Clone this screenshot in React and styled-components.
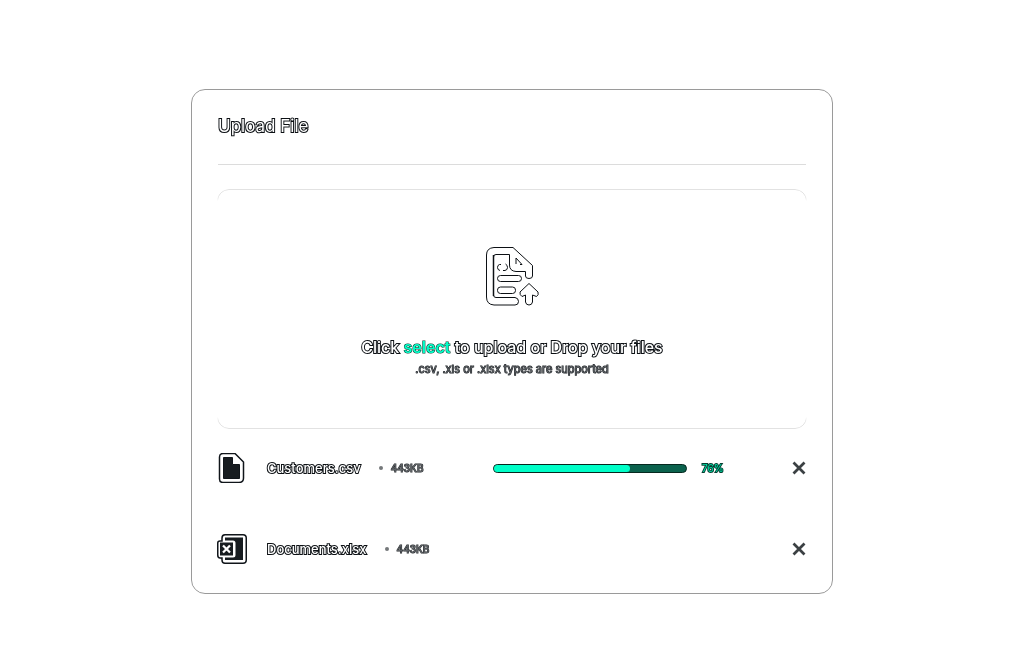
import React from "react";
import styled, { createGlobalStyle } from "styled-components";

const GlobalStyle = createGlobalStyle`
  * { box-sizing: border-box; }
  body {
    margin: 0;
    background: #fff;
    color: #10151a;
    font-family: Inter, "Liberation Sans", sans-serif;
  }
`;

const Page = styled.main`
  display: flex;
  justify-content: center;
  padding: 89px 24px 70px;
  will-change: transform;
`;

const Card = styled.section`
  width: 100%;
  max-width: 642px;
  padding: 24px 25px;
  border: 1px solid #9a9a9a;
  border-radius: 14px;
`;

const Header = styled.header`
  margin: 0 1px 24px;
  padding-bottom: 26px;
  border-bottom: 1px solid #dcdcdc;
`;

const Outlined = styled.span`
  color: #fff;
  -webkit-text-stroke: 2px #0c1014;
  paint-order: stroke fill;
`;

const Title = styled(Outlined).attrs({ as: "h1" })`
  margin: 0;
  font-size: 17px;
  line-height: 24px;
  font-weight: 400;
`;

const DropZone = styled.div`
  position: relative;
  display: flex;
  flex-direction: column;
  align-items: center;
  height: 240px;
  padding-top: 56px;

  &::before {
    content: "";
    position: absolute;
    inset: 0;
    border: 1px solid #e2e2e2;
    border-radius: 12px;
    mask-image: linear-gradient(#000 8px, transparent 12px calc(100% - 12px), #000 calc(100% - 8px));
    pointer-events: none;
  }
`;

const Prompt = styled(Outlined).attrs({ as: "p" })`
  margin: 28px 0 0;
  font-size: 16px;
  line-height: 24px;
  font-weight: 500;
`;

const SelectButton = styled.button`
  padding: 0;
  border: 0;
  background: none;
  font: inherit;
  font-weight: 600;
  color: #00ffc8;
  -webkit-text-stroke: 1px #08362b;
  paint-order: stroke fill;
  cursor: pointer;
`;

const Hint = styled.p`
  margin: 0;
  font-size: 11px;
  line-height: 20px;
  color: #606468;
  -webkit-text-stroke: 1px #15191d;
  paint-order: stroke fill;
`;

const FileList = styled.ul`
  display: flex;
  flex-direction: column;
  gap: 41px;
  margin: 19px 0 0;
  padding: 0;
  list-style: none;
`;

const FileRow = styled.li`
  display: flex;
  align-items: center;
  height: 40px;
`;

const FileInfo = styled.div`
  display: flex;
  align-items: center;
  flex: 0 0 276px;
`;

const IconCell = styled.span`
  display: flex;
  width: 50px;
`;

const FileName = styled(Outlined)`
  font-size: 13px;
  line-height: 20px;
  font-weight: 500;
`;

const Dot = styled.span`
  width: 4px;
  height: 4px;
  margin: 0 8px 0 18px;
  border-radius: 50%;
  background: #74787a;
`;

const FileSize = styled.span`
  font-size: 10px;
  line-height: 20px;
  font-weight: 500;
  color: #606468;
  -webkit-text-stroke: 1px #1d2124;
  paint-order: stroke fill;
`;

const Track = styled.div`
  flex: 0 1 194px;
  height: 9px;
  border: 1px solid #06281f;
  border-radius: 5px;
  background: #0b624d;
  overflow: hidden;
`;

const Bar = styled.div`
  height: 100%;
  border-radius: 0 4px 4px 0;
  background: #00ffc8;
`;

const Percent = styled.span`
  margin-left: 15px;
  font-size: 10px;
  line-height: 20px;
  color: #00e0a8;
  -webkit-text-stroke: 2px #063d30;
  paint-order: stroke fill;
`;

const CloseButton = styled.button`
  display: flex;
  margin: 0 1px 0 auto;
  padding: 0;
  border: 0;
  background: none;
  cursor: pointer;
`;

function UploadIcon() {
  return (
    <svg width="56" height="62" viewBox="0 0 56 62" fill="none" stroke="#0c1014" aria-hidden="true">
      <path d="M10 2.5H29L48.5 20.5V31Q48.5 33.5 45 33.5Q41.5 33.5 41.5 31V26.5H32Q25.5 26 25.5 20V9.5H12Q9.5 9.5 9.5 12V50Q9.5 52.5 12 52.5H31Q34.5 53 34.5 56.5Q34.5 60 31 60H10Q2.5 59.5 2.5 52V10Q2.5 3 10 2.5Z" />
      <path d="M9.5 10V51" strokeWidth="1.500" />
      <path d="M32 13V19M32 13L38 19.500H36" />
      <path d="M17 19.500H15.500Q13.500 20 13.500 22.500Q13.500 25 16 25.500M19 25.500H21Q23.500 25 23.500 22.500Q23.500 20 21.500 19" />
      <rect x="13.500" y="30.500" width="24" height="6" rx="3" />
      <rect x="13.500" y="42" width="18" height="6.500" rx="3" />
      <path d="M45 38.500L54 47Q55 50 52.500 51.500L48.500 50V57Q48 60 45 60Q42 60 41.500 57V50L38 51.500Q35.500 50 36 47Z" />
    </svg>
  );
}

function CsvIcon() {
  return (
    <svg width="30" height="30" viewBox="0 0 30 30" fill="none" aria-hidden="true">
      <path d="M6 .5H18L26.500 9V25Q26.500 29.500 22 29.500H6Q2.500 29.500 2.500 26V4Q2.500 .5 6 .5Z" fill="#fff" stroke="#10151a" strokeWidth="1.500" />
      <path d="M6.500 4.500H15.500V11.500H22.500V25.500H6.500Z" fill="#171c20" stroke="#10151a" />
    </svg>
  );
}

function XlsxIcon() {
  return (
    <svg width="30" height="30" viewBox="0 0 30 30" fill="none" aria-hidden="true">
      <path d="M8 .75H26Q29.250 .75 29.250 4V26Q29.250 29.250 26 29.250H8Q5 29.250 5 26V24H3Q.75 24 .75 21V9Q.75 7 3 7H5V4Q5 .75 8 .75Z" fill="#fff" stroke="#10151a" strokeWidth="1.500" />
      <path d="M8 3.500H26V26H8V23.500H16Q18.500 23.500 18.500 21V9Q18.500 6.500 16 6.500H8Z" fill="#171c20" />
      <rect x="3" y="8.500" width="13" height="13" fill="#171c20" />
      <path d="M6 11.500L13 18.500M13 11.500L6 18.500" stroke="#fff" strokeWidth="2.250" />
    </svg>
  );
}

function CloseIcon() {
  return (
    <svg width="14" height="14" viewBox="0 0 14 14" fill="none" aria-hidden="true">
      <path d="M1.500 1.500L12.500 12.500M12.500 1.500L1.500 12.500" stroke="#3b4043" strokeWidth="2.750" />
    </svg>
  );
}

const files = [
  { name: "Customers.csv", size: "443KB", Icon: CsvIcon, progress: 76, trackFill: 71 },
  { name: "Documents.xlsx", size: "443KB", Icon: XlsxIcon },
];

export default function App() {
  return (
    <>
      <GlobalStyle />
      <Page>
        <Card>
          <Header>
            <Title>Upload File</Title>
          </Header>
          <DropZone>
            <UploadIcon />
            <Prompt>
              Click <SelectButton type="button">select</SelectButton> to upload or Drop your files
            </Prompt>
            <Hint>.csv, .xls or .xlsx types are supported</Hint>
          </DropZone>
          <FileList>
            {files.map(({ name, size, Icon, progress, trackFill }) => (
              <FileRow key={name}>
                <FileInfo>
                  <IconCell><Icon /></IconCell>
                  <FileName>{name}</FileName>
                  <Dot />
                  <FileSize>{size}</FileSize>
                </FileInfo>
                {progress && (
                  <>
                    <Track role="progressbar" aria-label={name} aria-valuenow={progress} aria-valuemin={0} aria-valuemax={100}>
                      <Bar style={{ width: `${trackFill}%` }} />
                    </Track>
                    <Percent>{progress}%</Percent>
                  </>
                )}
                <CloseButton type="button" aria-label={`Remove ${name}`}>
                  <CloseIcon />
                </CloseButton>
              </FileRow>
            ))}
          </FileList>
        </Card>
      </Page>
    </>
  );
}
